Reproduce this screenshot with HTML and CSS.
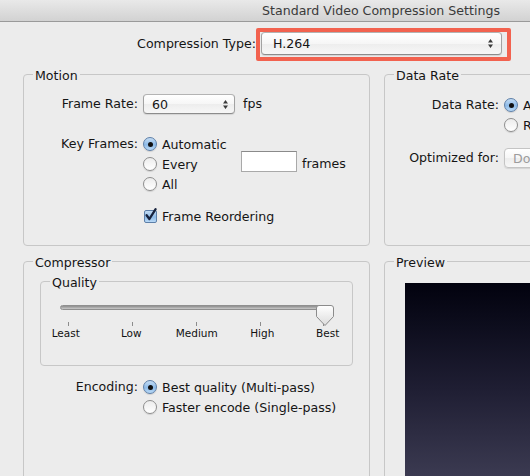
FILE: index.html
```html
<!DOCTYPE html>
<html lang="en">
<head>
<meta charset="utf-8">
<title>Standard Video Compression Settings</title>
<link rel="stylesheet" href="styles.css">
</head>
<body>
<header class="titlebar"><span>Standard Video Compression Settings</span></header>

<div class="type-row">
  <span class="type-label">Compression Type:</span>
  <div class="highlight">
    <div class="popup popup-type">
      <span class="ptext">H.264</span>
      <svg class="arrows" width="5" height="11" viewBox="0 0 5 11"><path d="M0 4.5 L2.5 1 L5 4.5Z M0 6.5 L2.5 10 L5 6.5Z"/></svg>
    </div>
  </div>
</div>

<main class="panels">
  <fieldset class="group">
    <legend>Motion</legend>
    <div class="row m-rate">
      <span class="lbl">Frame Rate:</span>
      <div class="popup popup-rate">
        <span class="ptext">60</span>
        <svg class="arrows" width="5" height="11" viewBox="0 0 5 11"><path d="M0 4.5 L2.5 1 L5 4.5Z M0 6.5 L2.5 10 L5 6.5Z"/></svg>
      </div>
      <span class="unit">fps</span>
    </div>
    <div class="row m-keys">
      <span class="lbl">Key Frames:</span>
      <div class="opts">
        <div class="opt"><span class="radio on"></span>Automatic</div>
        <div class="opt">
          <span class="opt-main"><span class="radio"></span>Every</span>
          <span class="field"></span>
          <span class="unit">frames</span>
        </div>
        <div class="opt"><span class="radio"></span>All</div>
      </div>
    </div>
    <div class="row m-check">
      <span class="lbl"></span>
      <div class="opt">
        <span class="check"><svg width="14" height="14" viewBox="0 0 14 14"><path d="M2.6 6.2 L5.4 10 L11.6 0.2"/></svg></span>Frame Reordering
      </div>
    </div>
  </fieldset>

  <fieldset class="group">
    <legend>Data Rate</legend>
    <div class="row d-rate">
      <span class="lbl">Data Rate:</span>
      <div class="opts">
        <div class="opt"><span class="radio on"></span>Automatic</div>
        <div class="opt"><span class="radio"></span>Restrict to</div>
      </div>
    </div>
    <div class="row d-opt">
      <span class="lbl">Optimized for:</span>
      <div class="popup popup-dis"><span class="ptext">Download</span></div>
    </div>
  </fieldset>

  <fieldset class="group">
    <legend>Compressor</legend>
    <fieldset class="group quality">
      <legend>Quality</legend>
      <div class="slider">
        <div class="track"></div>
        <svg class="knob" width="18" height="21" viewBox="0 0 18 21">
          <defs>
            <linearGradient id="kg" x1="0" y1="0" x2="0" y2="1">
              <stop offset="0" stop-color="#ffffff"/>
              <stop offset="1" stop-color="#dcdcdc"/>
            </linearGradient>
          </defs>
          <path d="M3 0.5 H15 Q17.5 0.5 17.5 3 V11.5 L9 20.5 L0.5 11.5 V3 Q0.5 0.5 3 0.5 Z" fill="url(#kg)" stroke="#8b8b8b"/>
        </svg>
      </div>
      <div class="ticks"><span></span><span></span><span></span><span></span><span></span></div>
      <div class="scale">
        <span>Least</span><span>Low</span><span>Medium</span><span>High</span><span>Best</span>
      </div>
    </fieldset>
    <div class="row enc">
      <span class="lbl">Encoding:</span>
      <div class="opts">
        <div class="opt"><span class="radio on"></span>Best quality (Multi-pass)</div>
        <div class="opt"><span class="radio"></span>Faster encode (Single-pass)</div>
      </div>
    </div>
  </fieldset>

  <fieldset class="group">
    <legend>Preview</legend>
    <div class="preview-img"></div>
  </fieldset>
</main>
</body>
</html>
```

FILE: styles.css
```css
html, body {
  margin: 0;
  padding: 0;
  width: 530px;
  height: 476px;
  overflow: hidden;
}

body {
  background: #ececec;
  font-family: "DejaVu Sans", "Liberation Sans", sans-serif;
  font-size: 12.6px;
  color: #151515;
  white-space: nowrap;
}

.titlebar {
  box-sizing: border-box;
  height: 22px;
  padding: 1px 30px 0 0;
  line-height: 20px;
  display: flex;
  justify-content: flex-end;
  background: linear-gradient(#e9e9e9, #d2d2d2);
  border-bottom: 1px solid #9a9a9a;
  color: #3a3a3a;
}

/* Compression type row */
.type-row {
  display: flex;
  align-items: baseline;
  margin-top: 6px;
}

.type-label {
  width: 256px;
  text-align: right;
}

.highlight {
  border: 4px solid #f2624f;
  border-radius: 2px;
  padding: 0 5px 2px 1px;
}

.popup {
  box-sizing: border-box;
  display: flex;
  align-items: center;
  border: 1px solid #a2a2a2;
  border-top-color: #b3b3b3;
  border-bottom-color: #8c8c8c;
  border-radius: 4px;
  background: linear-gradient(#ffffff, #f6f6f6 50%, #ededed 52%, #f7f7f7);
  box-shadow: 0 1px 1px rgba(0, 0, 0, 0.10);
}

.ptext {
  flex: 1;
}

.arrows {
  flex: none;
  fill: #3a3a3a;
}

.popup-type {
  width: 241px;
  height: 23px;
  padding: 0 8px 0 11px;
}

.popup-rate {
  width: 92px;
  height: 20px;
  padding: 0 6px 0 8px;
}

.popup-dis {
  width: 120px;
  height: 20px;
  padding: 0 6px 0 8px;
  color: #9c9c9c;
  border-color: #c4c4c4;
}

/* Panels */
.panels {
  display: grid;
  grid-template-columns: 347px 220px;
  grid-template-rows: 182px 260px;
  column-gap: 14px;
  row-gap: 5px;
  margin: 3px 0 0 23px;
}

fieldset.group {
  margin: 0;
  padding: 0;
  min-width: 0;
  border: 1px solid #c7c7c7;
  border-radius: 4px;
}

legend {
  padding: 4px 2px 0;
  margin-left: 9px;
  line-height: 16px;
}

.row {
  display: flex;
  align-items: flex-start;
}

.lbl {
  flex: none;
  width: 114px;
  margin-right: 5px;
  text-align: right;
  line-height: 20px;
}

.unit {
  line-height: 20px;
  margin-left: 8px;
}

.opts {
  display: flex;
  flex-direction: column;
}

.opt {
  display: flex;
  align-items: center;
  height: 20px;
}

.opt-main {
  display: flex;
  align-items: center;
  width: 98px;
}

.radio {
  flex: none;
  box-sizing: border-box;
  width: 14px;
  height: 14px;
  margin: 0 5px 0 0;
  border-radius: 50%;
  border: 1px solid #8e8e8e;
  background: linear-gradient(#ececec, #ffffff);
  box-shadow: 0 1px 1px rgba(0, 0, 0, 0.12);
  display: flex;
  align-items: center;
  justify-content: center;
}

.radio.on {
  border-color: #5d7fa8;
  background: linear-gradient(#c4dcf3, #8ebbe8 55%, #b9d9f6);
}

.radio.on::after {
  content: "";
  width: 5px;
  height: 5px;
  border-radius: 50%;
  background: #111;
}

.field {
  flex: none;
  align-self: flex-start;
  box-sizing: border-box;
  width: 56px;
  height: 21px;
  margin-top: -3px;
  background: #fff;
  border: 1px solid #a9a9a9;
  border-top-color: #8a8a8a;
}

.opt .field + .unit {
  margin-left: 5px;
}

.check {
  flex: none;
  box-sizing: border-box;
  width: 13px;
  height: 13px;
  margin: 0 5px 0 1px;
  border: 1px solid #5d7fa8;
  border-radius: 2px;
  background: linear-gradient(#c4dcf3, #8ebbe8 55%, #b9d9f6);
  display: flex;
  align-items: flex-end;
  justify-content: flex-start;
}

.check svg {
  flex: none;
  overflow: visible;
  fill: none;
  stroke: #17223d;
  stroke-width: 2.3;
  stroke-linecap: round;
  stroke-linejoin: round;
  margin: 0 0 -1px -1px;
}

/* Motion rows */
.m-rate { margin-top: 10px; }
.m-keys { margin-top: 20px; }
.m-check { margin-top: 12px; }

/* Data rate rows */
.d-rate { margin-top: 11px; }
.d-opt { margin-top: 13px; }

/* Quality */
fieldset.quality {
  margin: 0 16px;
  padding-bottom: 25px;
}

.slider {
  position: relative;
  width: 274px;
  height: 20px;
  margin: 14px 0 0 19px;
}

.track {
  width: 270px;
  height: 5px;
  margin-top: 3px;
  box-sizing: border-box;
  border-radius: 3px;
  border: 1px solid #8f8f8f;
  background: linear-gradient(#8d8d8d, #c9c9c9);
}

.knob {
  position: absolute;
  left: 256px;
  top: 0;
}

.ticks {
  display: grid;
  grid-template-columns: repeat(5, 63.75px);
  height: 4px;
  margin: -3px 0 0 -4px;
}

.ticks span {
  justify-self: center;
  width: 1px;
  height: 4px;
  background: #8c8c8c;
}

.scale {
  display: grid;
  grid-template-columns: repeat(5, 65.5px);
  margin: 1px 0 0 -8px;
  font-size: 10.5px;
  line-height: 13px;
  text-align: center;
  color: #111;
}

.enc { margin-top: 11px; }

/* Preview */
.preview-img {
  height: 193px;
  margin: 12px 0 0 20px;
  background: linear-gradient(#02020e 0%, #0d0d1d 22%, #1f1e33 55%, #3b3a51 100%);
}
```
